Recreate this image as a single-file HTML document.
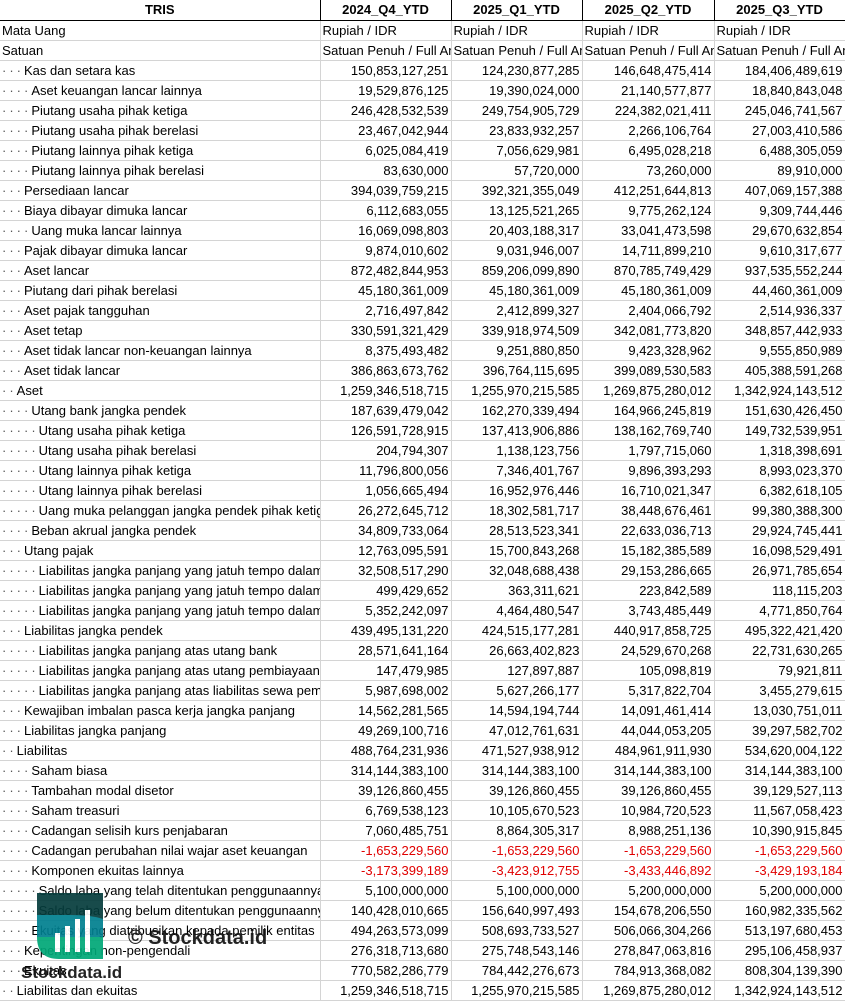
<!DOCTYPE html>
<html><head><meta charset="utf-8"><style>
*{margin:0;padding:0;box-sizing:border-box}
body{width:845px;height:1001px;background:#fff;overflow:hidden;position:relative;font-family:"Liberation Sans",Arial,sans-serif;font-size:13px;color:#000}
table{border-collapse:collapse;table-layout:fixed;position:absolute;left:0;top:0;width:845px}
td{height:20px;border-right:1px solid #d4d4d4;border-bottom:1px solid #d4d4d4;white-space:nowrap;overflow:hidden;padding:0 2px;line-height:19px;max-width:0}
td.n{text-align:right}
tr.h td{font-weight:bold;text-align:center;border-right:1px solid #000;border-bottom:1px solid #000}
.r td.n{color:#e00000}
.d{color:#555;letter-spacing:3px}
.wm{position:absolute;opacity:.92}
</style></head><body>
<table>
<colgroup><col style="width:320px"><col style="width:131px"><col style="width:131px"><col style="width:132px"><col style="width:131px"></colgroup>
<tr class="h"><td>TRIS</td><td>2024_Q4_YTD</td><td>2025_Q1_YTD</td><td>2025_Q2_YTD</td><td>2025_Q3_YTD</td></tr>
<tr><td>Mata Uang</td><td>Rupiah / IDR</td><td>Rupiah / IDR</td><td>Rupiah / IDR</td><td>Rupiah / IDR</td></tr>
<tr><td>Satuan</td><td>Satuan Penuh / Full Amount</td><td>Satuan Penuh / Full Amount</td><td>Satuan Penuh / Full Amount</td><td>Satuan Penuh / Full Amount</td></tr>
<tr><td><span class="d">···</span>Kas dan setara kas</td><td class="n">150,853,127,251</td><td class="n">124,230,877,285</td><td class="n">146,648,475,414</td><td class="n">184,406,489,619</td></tr>
<tr><td><span class="d">····</span>Aset keuangan lancar lainnya</td><td class="n">19,529,876,125</td><td class="n">19,390,024,000</td><td class="n">21,140,577,877</td><td class="n">18,840,843,048</td></tr>
<tr><td><span class="d">····</span>Piutang usaha pihak ketiga</td><td class="n">246,428,532,539</td><td class="n">249,754,905,729</td><td class="n">224,382,021,411</td><td class="n">245,046,741,567</td></tr>
<tr><td><span class="d">····</span>Piutang usaha pihak berelasi</td><td class="n">23,467,042,944</td><td class="n">23,833,932,257</td><td class="n">2,266,106,764</td><td class="n">27,003,410,586</td></tr>
<tr><td><span class="d">····</span>Piutang lainnya pihak ketiga</td><td class="n">6,025,084,419</td><td class="n">7,056,629,981</td><td class="n">6,495,028,218</td><td class="n">6,488,305,059</td></tr>
<tr><td><span class="d">····</span>Piutang lainnya pihak berelasi</td><td class="n">83,630,000</td><td class="n">57,720,000</td><td class="n">73,260,000</td><td class="n">89,910,000</td></tr>
<tr><td><span class="d">···</span>Persediaan lancar</td><td class="n">394,039,759,215</td><td class="n">392,321,355,049</td><td class="n">412,251,644,813</td><td class="n">407,069,157,388</td></tr>
<tr><td><span class="d">···</span>Biaya dibayar dimuka lancar</td><td class="n">6,112,683,055</td><td class="n">13,125,521,265</td><td class="n">9,775,262,124</td><td class="n">9,309,744,446</td></tr>
<tr><td><span class="d">····</span>Uang muka lancar lainnya</td><td class="n">16,069,098,803</td><td class="n">20,403,188,317</td><td class="n">33,041,473,598</td><td class="n">29,670,632,854</td></tr>
<tr><td><span class="d">···</span>Pajak dibayar dimuka lancar</td><td class="n">9,874,010,602</td><td class="n">9,031,946,007</td><td class="n">14,711,899,210</td><td class="n">9,610,317,677</td></tr>
<tr><td><span class="d">···</span>Aset lancar</td><td class="n">872,482,844,953</td><td class="n">859,206,099,890</td><td class="n">870,785,749,429</td><td class="n">937,535,552,244</td></tr>
<tr><td><span class="d">···</span>Piutang dari pihak berelasi</td><td class="n">45,180,361,009</td><td class="n">45,180,361,009</td><td class="n">45,180,361,009</td><td class="n">44,460,361,009</td></tr>
<tr><td><span class="d">···</span>Aset pajak tangguhan</td><td class="n">2,716,497,842</td><td class="n">2,412,899,327</td><td class="n">2,404,066,792</td><td class="n">2,514,936,337</td></tr>
<tr><td><span class="d">···</span>Aset tetap</td><td class="n">330,591,321,429</td><td class="n">339,918,974,509</td><td class="n">342,081,773,820</td><td class="n">348,857,442,933</td></tr>
<tr><td><span class="d">···</span>Aset tidak lancar non-keuangan lainnya</td><td class="n">8,375,493,482</td><td class="n">9,251,880,850</td><td class="n">9,423,328,962</td><td class="n">9,555,850,989</td></tr>
<tr><td><span class="d">···</span>Aset tidak lancar</td><td class="n">386,863,673,762</td><td class="n">396,764,115,695</td><td class="n">399,089,530,583</td><td class="n">405,388,591,268</td></tr>
<tr><td><span class="d">··</span>Aset</td><td class="n">1,259,346,518,715</td><td class="n">1,255,970,215,585</td><td class="n">1,269,875,280,012</td><td class="n">1,342,924,143,512</td></tr>
<tr><td><span class="d">····</span>Utang bank jangka pendek</td><td class="n">187,639,479,042</td><td class="n">162,270,339,494</td><td class="n">164,966,245,819</td><td class="n">151,630,426,450</td></tr>
<tr><td><span class="d">·····</span>Utang usaha pihak ketiga</td><td class="n">126,591,728,915</td><td class="n">137,413,906,886</td><td class="n">138,162,769,740</td><td class="n">149,732,539,951</td></tr>
<tr><td><span class="d">·····</span>Utang usaha pihak berelasi</td><td class="n">204,794,307</td><td class="n">1,138,123,756</td><td class="n">1,797,715,060</td><td class="n">1,318,398,691</td></tr>
<tr><td><span class="d">·····</span>Utang lainnya pihak ketiga</td><td class="n">11,796,800,056</td><td class="n">7,346,401,767</td><td class="n">9,896,393,293</td><td class="n">8,993,023,370</td></tr>
<tr><td><span class="d">·····</span>Utang lainnya pihak berelasi</td><td class="n">1,056,665,494</td><td class="n">16,952,976,446</td><td class="n">16,710,021,347</td><td class="n">6,382,618,105</td></tr>
<tr><td><span class="d">·····</span>Uang muka pelanggan jangka pendek pihak ketiga</td><td class="n">26,272,645,712</td><td class="n">18,302,581,717</td><td class="n">38,448,676,461</td><td class="n">99,380,388,300</td></tr>
<tr><td><span class="d">····</span>Beban akrual jangka pendek</td><td class="n">34,809,733,064</td><td class="n">28,513,523,341</td><td class="n">22,633,036,713</td><td class="n">29,924,745,441</td></tr>
<tr><td><span class="d">···</span>Utang pajak</td><td class="n">12,763,095,591</td><td class="n">15,700,843,268</td><td class="n">15,182,385,589</td><td class="n">16,098,529,491</td></tr>
<tr><td><span class="d">·····</span>Liabilitas jangka panjang yang jatuh tempo dalam</td><td class="n">32,508,517,290</td><td class="n">32,048,688,438</td><td class="n">29,153,286,665</td><td class="n">26,971,785,654</td></tr>
<tr><td><span class="d">·····</span>Liabilitas jangka panjang yang jatuh tempo dalam</td><td class="n">499,429,652</td><td class="n">363,311,621</td><td class="n">223,842,589</td><td class="n">118,115,203</td></tr>
<tr><td><span class="d">·····</span>Liabilitas jangka panjang yang jatuh tempo dalam</td><td class="n">5,352,242,097</td><td class="n">4,464,480,547</td><td class="n">3,743,485,449</td><td class="n">4,771,850,764</td></tr>
<tr><td><span class="d">···</span>Liabilitas jangka pendek</td><td class="n">439,495,131,220</td><td class="n">424,515,177,281</td><td class="n">440,917,858,725</td><td class="n">495,322,421,420</td></tr>
<tr><td><span class="d">·····</span>Liabilitas jangka panjang atas utang bank</td><td class="n">28,571,641,164</td><td class="n">26,663,402,823</td><td class="n">24,529,670,268</td><td class="n">22,731,630,265</td></tr>
<tr><td><span class="d">·····</span>Liabilitas jangka panjang atas utang pembiayaan</td><td class="n">147,479,985</td><td class="n">127,897,887</td><td class="n">105,098,819</td><td class="n">79,921,811</td></tr>
<tr><td><span class="d">·····</span>Liabilitas jangka panjang atas liabilitas sewa pem</td><td class="n">5,987,698,002</td><td class="n">5,627,266,177</td><td class="n">5,317,822,704</td><td class="n">3,455,279,615</td></tr>
<tr><td><span class="d">···</span>Kewajiban imbalan pasca kerja jangka panjang</td><td class="n">14,562,281,565</td><td class="n">14,594,194,744</td><td class="n">14,091,461,414</td><td class="n">13,030,751,011</td></tr>
<tr><td><span class="d">···</span>Liabilitas jangka panjang</td><td class="n">49,269,100,716</td><td class="n">47,012,761,631</td><td class="n">44,044,053,205</td><td class="n">39,297,582,702</td></tr>
<tr><td><span class="d">··</span>Liabilitas</td><td class="n">488,764,231,936</td><td class="n">471,527,938,912</td><td class="n">484,961,911,930</td><td class="n">534,620,004,122</td></tr>
<tr><td><span class="d">····</span>Saham biasa</td><td class="n">314,144,383,100</td><td class="n">314,144,383,100</td><td class="n">314,144,383,100</td><td class="n">314,144,383,100</td></tr>
<tr><td><span class="d">····</span>Tambahan modal disetor</td><td class="n">39,126,860,455</td><td class="n">39,126,860,455</td><td class="n">39,126,860,455</td><td class="n">39,129,527,113</td></tr>
<tr><td><span class="d">····</span>Saham treasuri</td><td class="n">6,769,538,123</td><td class="n">10,105,670,523</td><td class="n">10,984,720,523</td><td class="n">11,567,058,423</td></tr>
<tr><td><span class="d">····</span>Cadangan selisih kurs penjabaran</td><td class="n">7,060,485,751</td><td class="n">8,864,305,317</td><td class="n">8,988,251,136</td><td class="n">10,390,915,845</td></tr>
<tr class="r"><td><span class="d">····</span>Cadangan perubahan nilai wajar aset keuangan</td><td class="n">-1,653,229,560</td><td class="n">-1,653,229,560</td><td class="n">-1,653,229,560</td><td class="n">-1,653,229,560</td></tr>
<tr class="r"><td><span class="d">····</span>Komponen ekuitas lainnya</td><td class="n">-3,173,399,189</td><td class="n">-3,423,912,755</td><td class="n">-3,433,446,892</td><td class="n">-3,429,193,184</td></tr>
<tr><td><span class="d">·····</span>Saldo laba yang telah ditentukan penggunaannya</td><td class="n">5,100,000,000</td><td class="n">5,100,000,000</td><td class="n">5,200,000,000</td><td class="n">5,200,000,000</td></tr>
<tr><td><span class="d">·····</span>Saldo laba yang belum ditentukan penggunaannya</td><td class="n">140,428,010,665</td><td class="n">156,640,997,493</td><td class="n">154,678,206,550</td><td class="n">160,982,335,562</td></tr>
<tr><td><span class="d">····</span>Ekuitas yang diatribusikan kepada pemilik entitas</td><td class="n">494,263,573,099</td><td class="n">508,693,733,527</td><td class="n">506,066,304,266</td><td class="n">513,197,680,453</td></tr>
<tr><td><span class="d">···</span>Kepentingan non-pengendali</td><td class="n">276,318,713,680</td><td class="n">275,748,543,146</td><td class="n">278,847,063,816</td><td class="n">295,106,458,937</td></tr>
<tr><td><span class="d">···</span>Ekuitas</td><td class="n">770,582,286,779</td><td class="n">784,442,276,673</td><td class="n">784,913,368,082</td><td class="n">808,304,139,390</td></tr>
<tr><td><span class="d">··</span>Liabilitas dan ekuitas</td><td class="n">1,259,346,518,715</td><td class="n">1,255,970,215,585</td><td class="n">1,269,875,280,012</td><td class="n">1,342,924,143,512</td></tr>
</table>
<svg class="wm" style="left:37px;top:893px" width="66" height="66" viewBox="0 0 66 66">
<path d="M0 0H66V66H22Q0 66 0 44Z" fill="#00a877"/>
<path d="M0 0H45Q66 0 66 22V44H0Z" fill="#007f8f"/>
<path d="M0 0H66V26Q55 22 33 22H0Z" fill="#053c3c"/>
<rect x="18" y="40" width="5" height="19" fill="#fff"/><rect x="28" y="33" width="5" height="26" fill="#fff"/><rect x="38" y="26" width="5" height="33" fill="#fff"/><rect x="48" y="17" width="5" height="42" fill="#fff"/>
</svg>
<div class="wm" style="left:21px;top:963px;font-size:17px;font-weight:bold;color:#111">Stockdata.id</div>
<div class="wm" style="left:128px;top:927px;font-size:20px;font-weight:bold;color:#111">© Stockdata.id</div>
</body></html>
